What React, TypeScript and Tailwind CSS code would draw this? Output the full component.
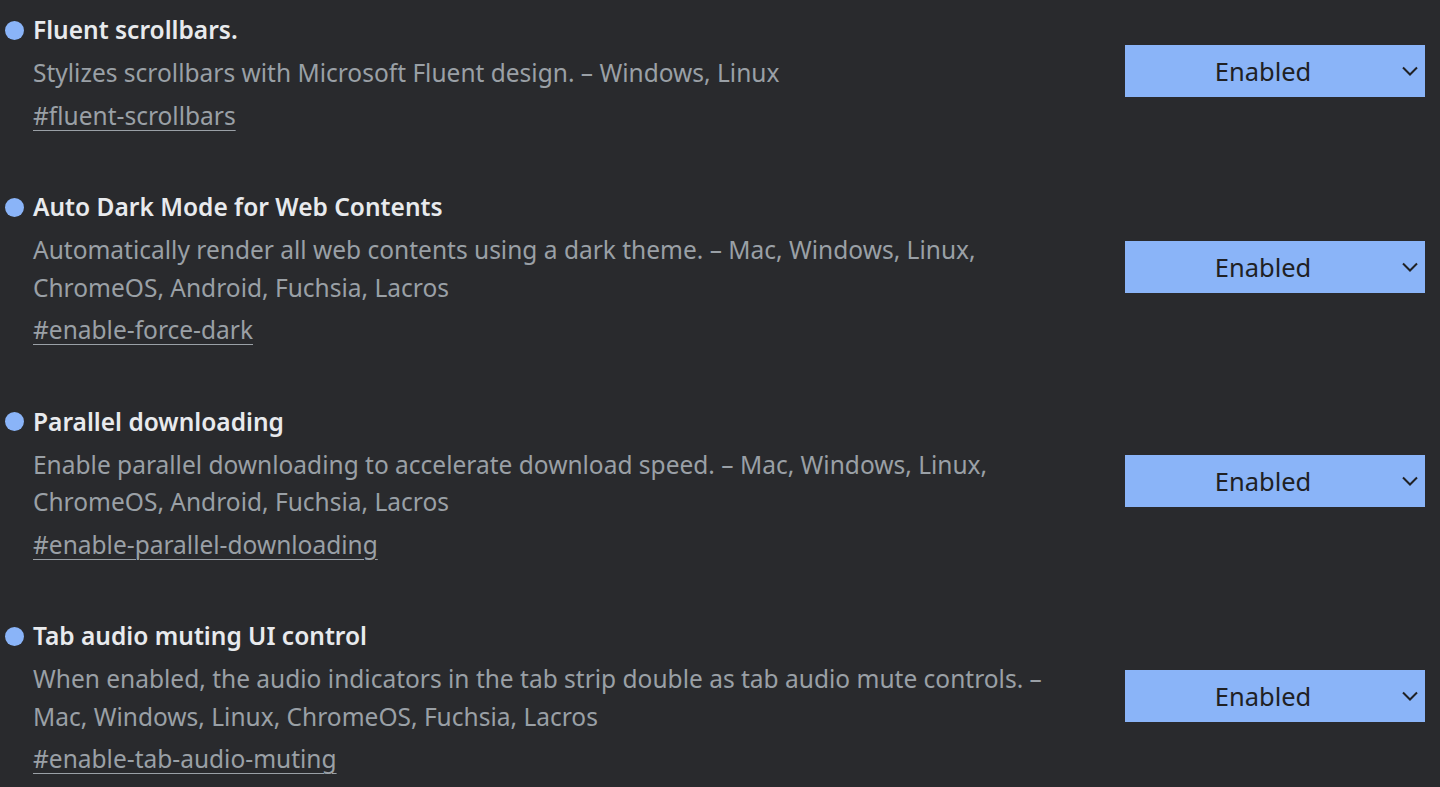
const flags = [
  {
    title: "Fluent scrollbars.",
    lines: ["Stylizes scrollbars with Microsoft Fluent design. – Windows, Linux"],
    tag: "#fluent-scrollbars",
  },
  {
    title: "Auto Dark Mode for Web Contents",
    lines: [
      "Automatically render all web contents using a dark theme. – Mac, Windows, Linux,",
      "ChromeOS, Android, Fuchsia, Lacros",
    ],
    tag: "#enable-force-dark",
  },
  {
    title: "Parallel downloading",
    lines: [
      "Enable parallel downloading to accelerate download speed. – Mac, Windows, Linux,",
      "ChromeOS, Android, Fuchsia, Lacros",
    ],
    tag: "#enable-parallel-downloading",
  },
  {
    title: "Tab audio muting UI control",
    lines: [
      "When enabled, the audio indicators in the tab strip double as tab audio mute controls. –",
      "Mac, Windows, Linux, ChromeOS, Fuchsia, Lacros",
    ],
    tag: "#enable-tab-audio-muting",
  },
];

export default function App() {
  return (
    <div className="min-h-screen overflow-hidden bg-[#292a2d] pt-3 font-['Noto_Sans',sans-serif]">
      <div className="flex flex-col gap-[55px]">
        {flags.map((flag) => (
          <div key={flag.tag} className="flex items-center pr-[15px]">
            <div className="flex-1">
              <div className="flex items-center">
                <span className="ml-[5px] mr-[9px] h-[19px] w-[19px] rounded-full bg-[#8ab4f8]" />
                <h2 className="text-[24.5px] font-semibold leading-9 text-[#e8eaed]">{flag.title}</h2>
              </div>
              <p className="ml-[33px] mt-1.5 text-[24.5px] leading-[37.5px] text-[#9aa0a6]">
                {flag.lines.map((line) => (
                  <span key={line} className="block whitespace-nowrap">
                    {line}
                  </span>
                ))}
              </p>
              <a
                href={flag.tag}
                className="ml-[33px] mt-[5px] block w-fit text-[24.5px] leading-[37.5px] text-[#9aa0a6] underline decoration-1 underline-offset-[5px]"
              >
                {flag.tag}
              </a>
            </div>
            <button className="relative mb-1 flex h-[52px] w-[300px] items-center justify-center bg-[#8ab4f8] pr-6 text-[25.5px] text-[#202124]">
              Enabled
              <svg
                className="absolute right-[7px] top-[21px]"
                width="16"
                height="10"
                viewBox="0 0 16 10"
                fill="none"
                stroke="#202124"
                strokeWidth="2"
              >
                <polyline points="1,1.5 8,8.5 15,1.5" />
              </svg>
            </button>
          </div>
        ))}
      </div>
    </div>
  );
}
